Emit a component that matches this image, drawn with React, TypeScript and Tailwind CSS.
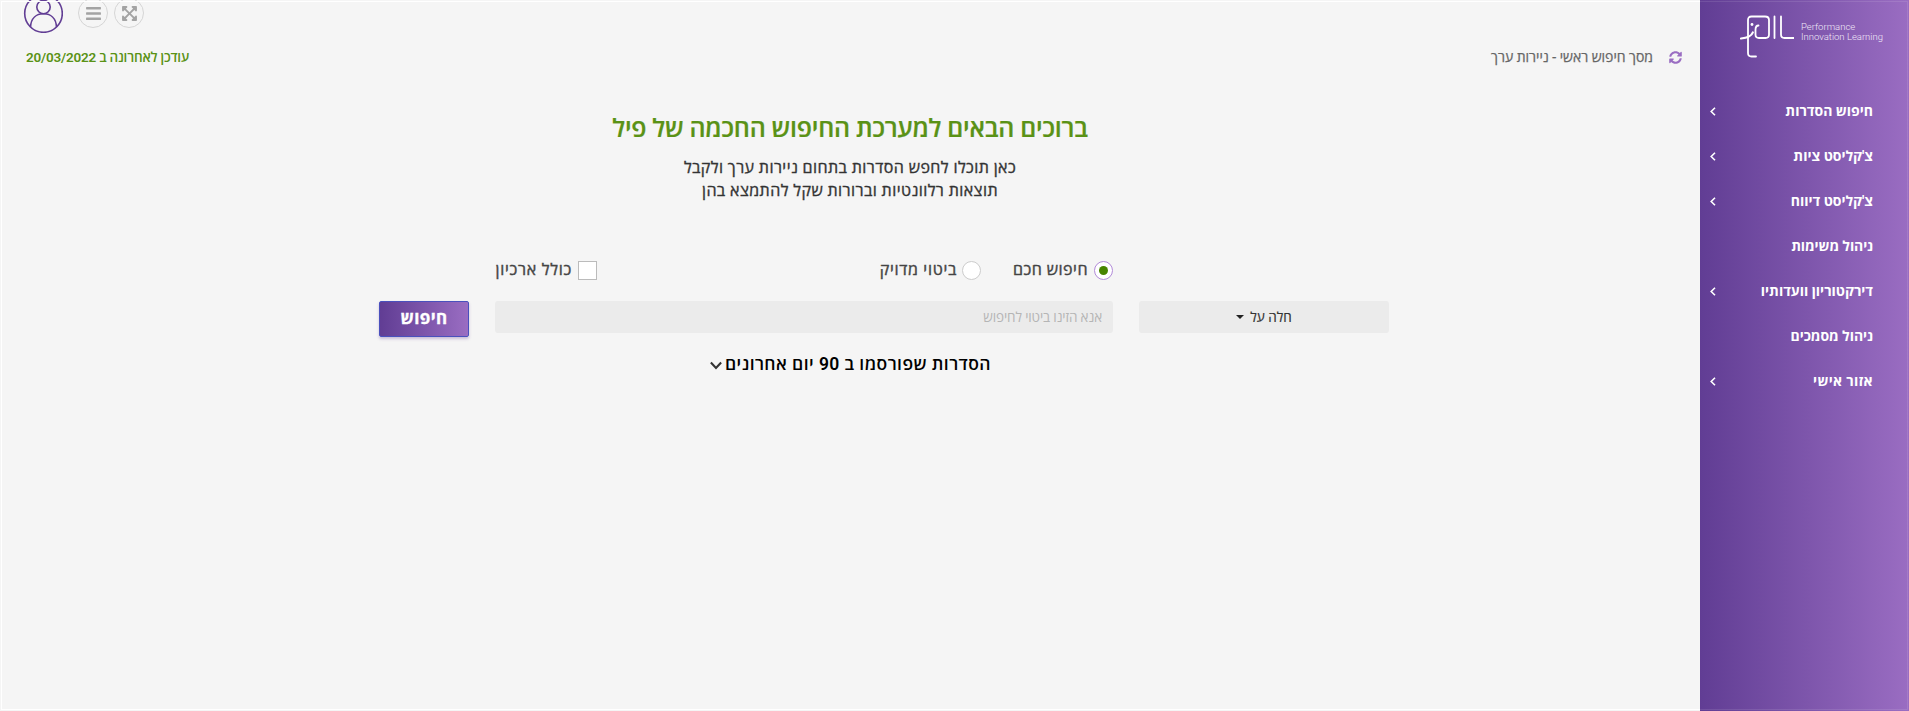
import React from 'react';
import { FaExpandArrowsAlt, FaBars, FaSyncAlt } from 'react-icons/fa';

type Item = { label: string; cls: string; open: boolean };

const items: Item[] = [
  { label: 'חיפוש הסדרות', cls: 'tracking-[0px]', open: true },
  { label: "צ'קליסט ציות", cls: 'tracking-[0px]', open: true },
  { label: "צ'קליסט דיווח", cls: 'tracking-[0px]', open: true },
  { label: 'ניהול משימות', cls: 'tracking-[-0.1px]', open: false },
  { label: 'דירקטוריון וועדותיו', cls: 'tracking-[0px]', open: true },
  { label: 'ניהול מסמכים', cls: 'tracking-[-0.05px]', open: false },
  { label: 'אזור אישי', cls: 'tracking-[0.3px]', open: true },
];

function Logo() {
  return (
    <svg width="54" height="44" viewBox="0 0 54 44" fill="none" stroke="#fff" strokeWidth="1.8" strokeLinecap="round" strokeLinejoin="round">
      <path d="M16 41.500H11.500Q8 41.500 8 38V5Q8 1.500 11.500 1.500H25Q29 1.500 29 5V19.500Q29 23 25.500 23H19Q15.500 23 15.500 19.500V15Q15.500 10.500 18.500 10.500" />
      <path d="M1 23.500Q11 22.500 12.800 17.500" strokeWidth="2.200" />
      <path d="M34.500 1.500V23M41 1.500V19.500Q41 23 44.500 23H54" />
      <circle cx="12" cy="9.500" r="1.400" fill="#fff" stroke="none" />
    </svg>
  );
}

export default function App() {
  return (
    <div dir="rtl" className="flex h-[711px] w-full overflow-hidden bg-[#f5f5f5] font-['Roboto','Open_Sans','Liberation_Sans',sans-serif]">
      <aside className="relative w-[209px] shrink-0 bg-gradient-to-l from-[#9a6dc2] to-[#613d94]">
        <div className="pointer-events-none absolute inset-y-px right-px left-0 border-y border-r border-white/10" />
        <div dir="ltr" className="flex h-[89px] items-start pt-[15px] pl-[40px]">
          <Logo />
          <div className="mt-[7px] ml-[7px] text-[9.5px] leading-[9.5px] font-light whitespace-nowrap text-[#f0e8f8]">
            Performance
            <br />
            Innovation Learning
          </div>
        </div>
        <nav>
          {items.map((it) => (
            <div key={it.label} className="flex h-[45px] items-center justify-between pr-[36px] pl-[10px] text-[14px] font-bold text-white">
              <span className={it.cls}>{it.label}</span>
              {it.open && (
                <svg width="6" height="9" viewBox="0 0 6 9" fill="none" stroke="#fff" strokeWidth="1.600"><path d="M5 .8 1.200 4.500 5 8.200" /></svg>
              )}
            </div>
          ))}
        </nav>
      </aside>

      <main className="relative flex flex-1 flex-col">
        <div className="pointer-events-none absolute inset-y-px right-0 left-px border-y border-l border-white" />
        <div className="flex h-[34px] items-start justify-end">
          <div dir="ltr" className="-mt-[7px] ml-[23px] flex">
            <svg width="40" height="40" viewBox="0 0 40 40" fill="none" stroke="#613d94" strokeWidth="1.600"><circle cx="20.500" cy="20.500" r="18.800" /><circle cx="20.500" cy="14" r="6.700" /><path d="M7.500 34C8 25 13.500 20.700 20.500 20.700S33 25 33.500 34" /></svg>
            <div className="mt-[5px] ml-[15px] flex size-[30px] items-center justify-center rounded-full border border-[#d5d5d5]"><FaBars size={17} color="#a3a3a3" /></div>
            <div className="mt-[5px] ml-[6px] flex size-[30px] items-center justify-center rounded-full border border-[#d5d5d5]"><FaExpandArrowsAlt size={17} color="#a3a3a3" /></div>
          </div>
        </div>
        <div className="flex h-[46px] items-center justify-between pr-[18px] pl-[26px] text-[14px]">
          <div className="flex items-center gap-[16px] text-[#666]"><FaSyncAlt size={13} color="#9a6dc2" /><span className="[-webkit-text-stroke:0.25px]">מסך חיפוש ראשי - ניירות ערך</span></div>
          <span className="text-[13.5px] font-semibold tracking-[-0.2px] text-[#5a9216]">עודכן לאחרונה ב 20/03/2022</span>
        </div>
        <div className="flex h-[180px] flex-col items-center pt-[29px] text-center">
          <h1 className="h-[40px] text-[25px] leading-[40px] font-semibold tracking-[-0.2px] whitespace-nowrap text-[#5a9216] [-webkit-text-stroke:0.2px]">ברוכים הבאים למערכת החיפוש החכמה של פיל</h1>
          <p className="mt-[7px] text-[16px] leading-[23px] tracking-[0.43px] text-[#333] [-webkit-text-stroke:0.35px]"><span>כאן תוכלו לחפש הסדרות בתחום ניירות ערך ולקבל</span><br /><span>תוצאות רלוונטיות וברורות שקל להתמצא בהן</span></p>
        </div>
        <div className="flex h-[20px] items-center pr-[587px] text-[16px] text-[#444] [-webkit-text-stroke:0.4px]">
          <div className="flex w-[132px] shrink-0 items-center gap-[6px]">
            <span className="flex size-[19px] items-center justify-center rounded-full border border-[#b28bd9] bg-white"><span className="size-[9px] rounded-full bg-[#478500]" /></span><span className="-mt-px tracking-[0.5px]">חיפוש חכם</span>
          </div>
          <div className="flex w-[384px] shrink-0 items-center gap-[5px]"><span className="size-[19px] rounded-full border border-[#ccc] bg-white" /><span className="-mt-px tracking-[0.7px]">ביטוי מדויק</span></div>
          <div className="flex items-center gap-[6px] whitespace-nowrap"><span className="size-[19px] border border-[#bbb] bg-white" /><span className="-mt-px tracking-[0.75px]">כולל ארכיון</span></div>
        </div>
        <div className="mt-[21px] flex items-start pr-[311px]">
          <div className="flex h-[32px] w-[250px] items-center justify-center gap-[6px] rounded-[3px] bg-[#ebebeb] text-[13.5px] text-[#333]"><span className="[-webkit-text-stroke:0.2px]">חלה על</span><span className="border-x-[4px] border-t-[4px] border-x-transparent border-t-[#222]" /></div>
          <div className="mr-[26px] flex h-[32px] w-[618px] items-center rounded-[3px] bg-[#ebebeb] pr-[11px] text-[13.5px] text-[#b5b5b5]"><span className="tracking-[-0.1px]">אנא הזינו ביטוי לחיפוש</span></div>
          <button className="mr-[26px] flex h-[36px] w-[90px] items-center justify-center rounded-[2px] border border-[#4a50bd] bg-gradient-to-l from-[#9a6dc2] to-[#613d94] text-[17px] font-bold text-white shadow-[0_2px_3px_rgba(100,60,150,0.3)]"><span className="tracking-[0.35px] [-webkit-text-stroke:0.3px]">חיפוש</span></button>
        </div>
        <div className="mt-[14px] flex h-[26px] items-center gap-[3px] pr-[709px] text-[17.5px] font-semibold whitespace-nowrap text-black">
          <span className="tracking-[0.43px]">הסדרות שפורסמו ב 90 יום אחרונים</span>
          <svg className="mt-[2px]" width="12" height="9" viewBox="0 0 11 8" fill="none" stroke="#333" strokeWidth="1.900"><path d="M.8 1.200 5.500 6.200 10.200 1.200" /></svg>
        </div>
      </main>
    </div>
  );
}
